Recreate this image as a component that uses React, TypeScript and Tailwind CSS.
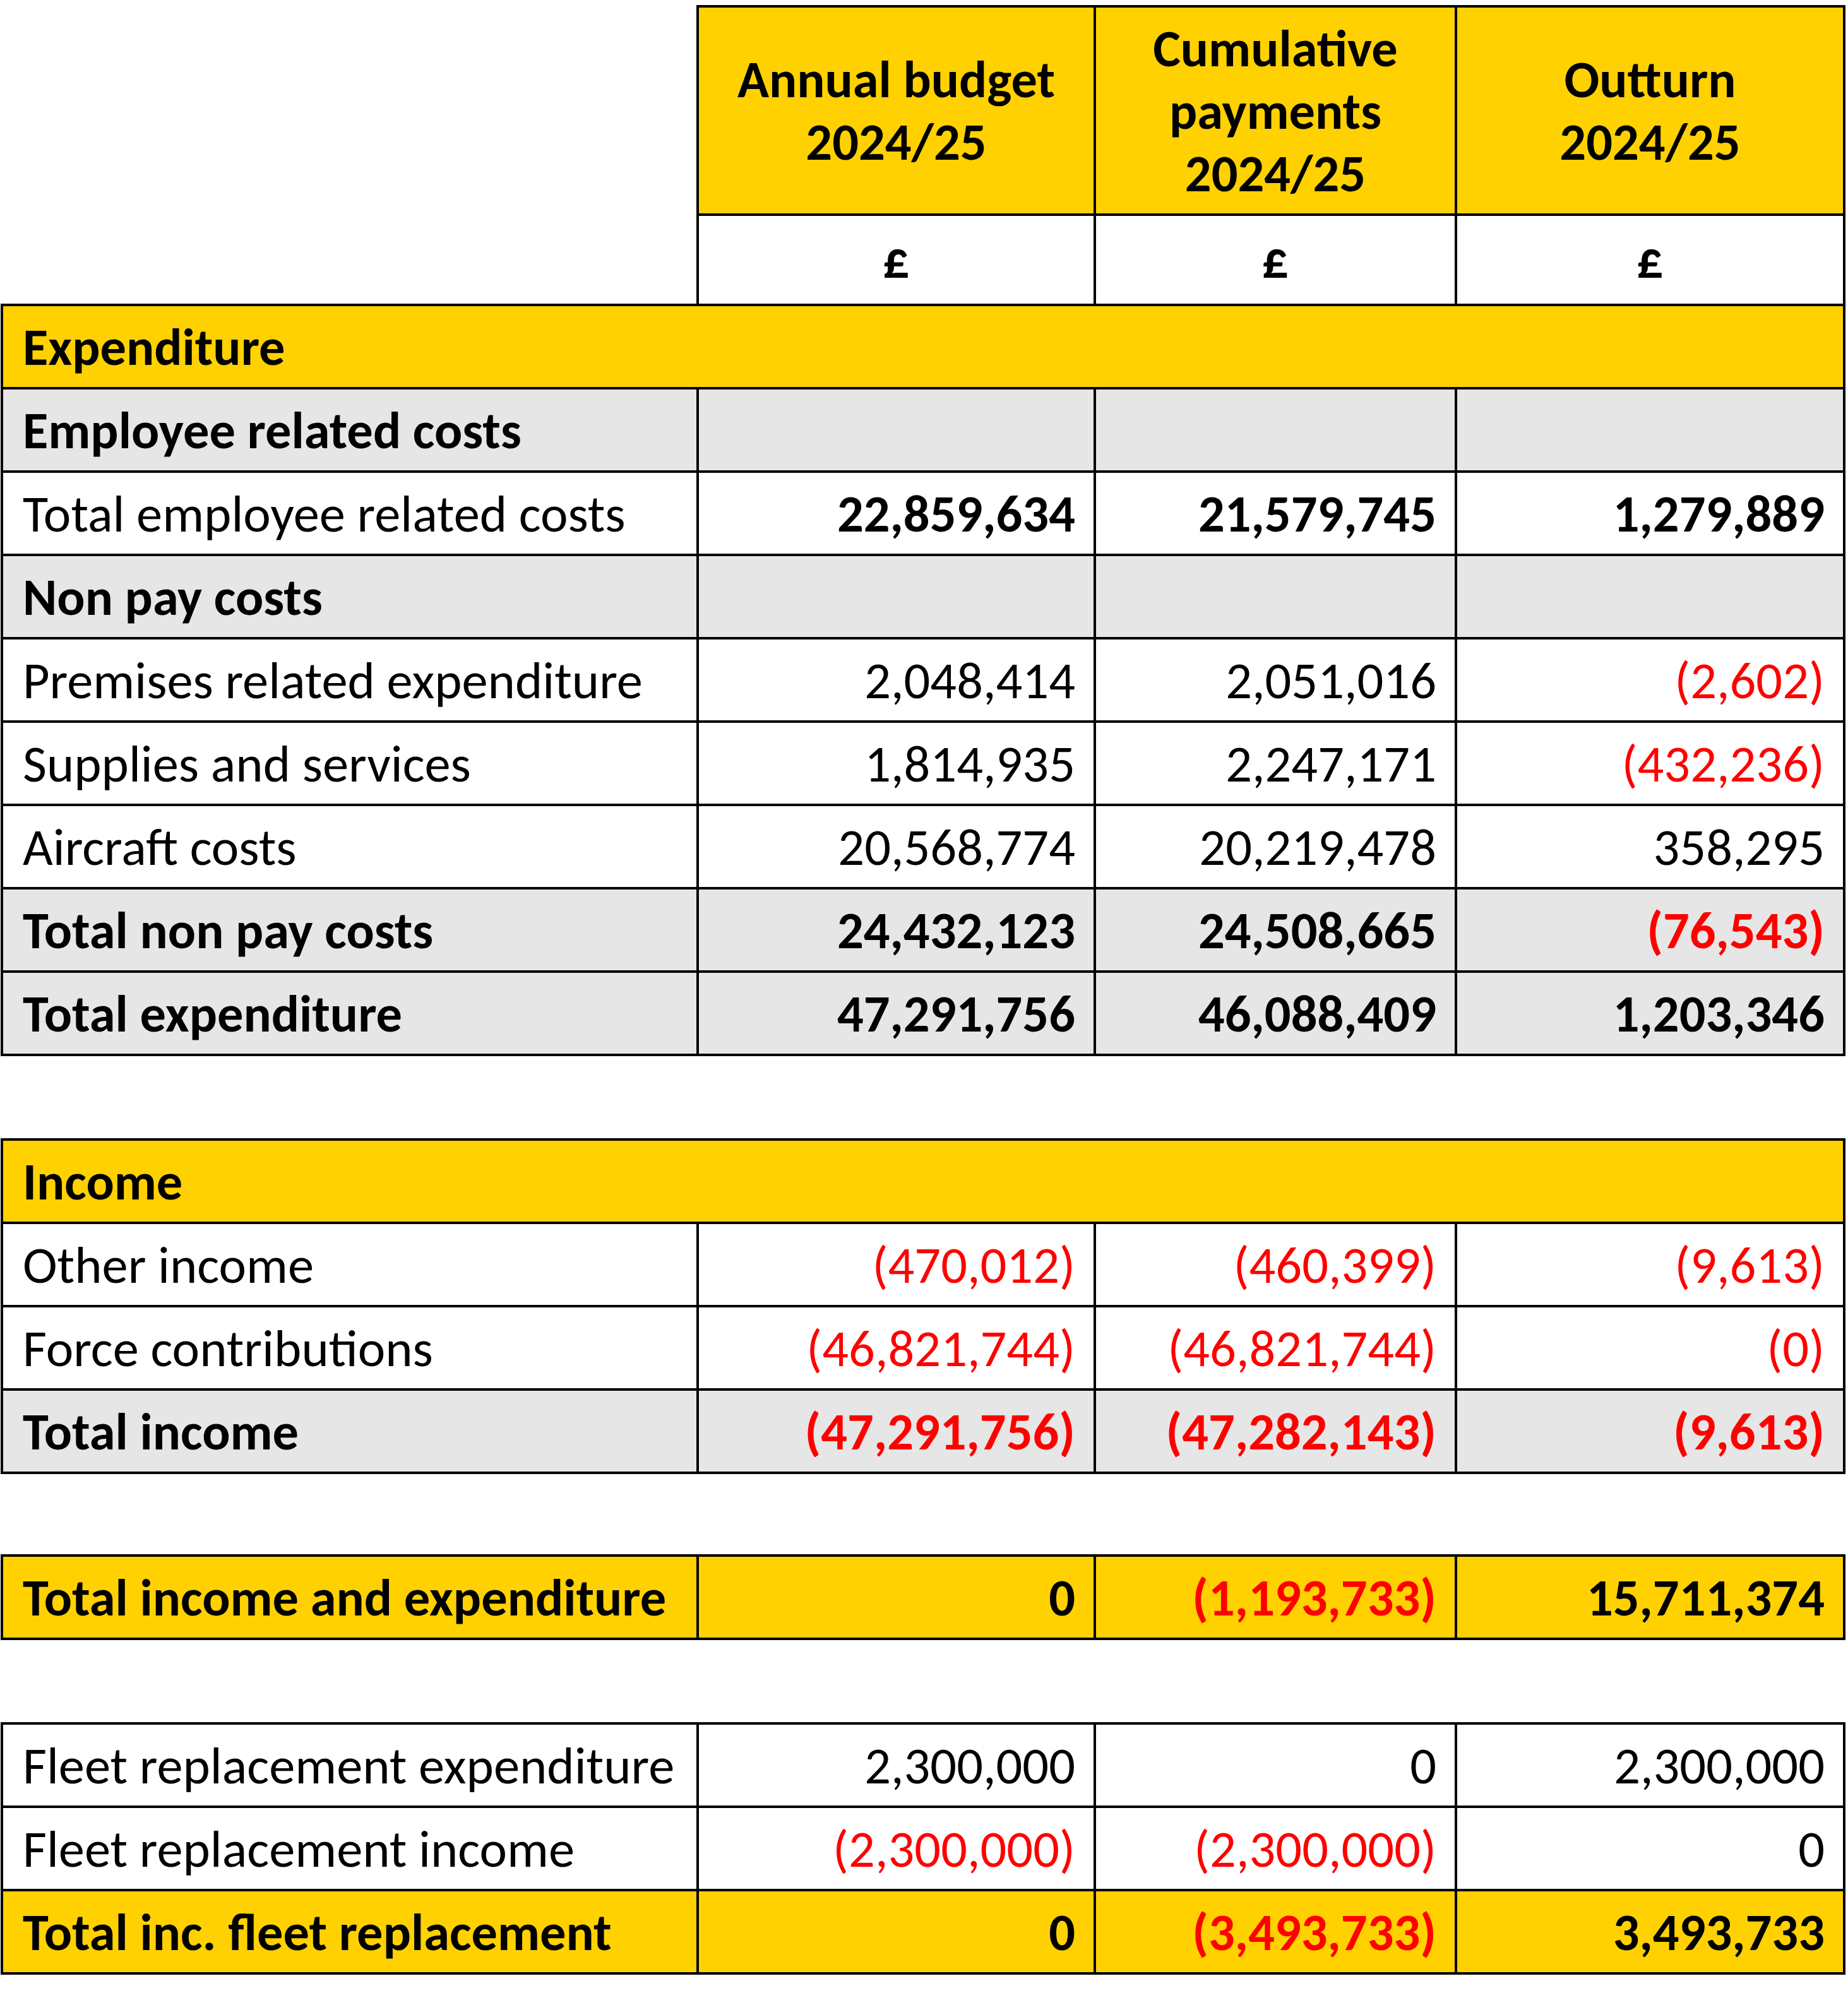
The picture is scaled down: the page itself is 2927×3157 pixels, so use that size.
type Row = {
  label: string;
  values?: string[];
  bg: "white" | "gray" | "yellow";
  labelBold?: boolean;
  valuesBold?: boolean;
};

const BG = {
  white: "bg-white",
  gray: "bg-[#e7e6e6]",
  yellow: "bg-[#ffd100]",
};

const expenditure: Row[] = [
  { label: "Expenditure", bg: "yellow", labelBold: true },
  { label: "Employee related costs", values: ["", "", ""], bg: "gray", labelBold: true },
  {
    label: "Total employee related costs",
    values: ["22,859,634", "21,579,745", "1,279,889"],
    bg: "white",
    valuesBold: true,
  },
  { label: "Non pay costs", values: ["", "", ""], bg: "gray", labelBold: true },
  { label: "Premises related expenditure", values: ["2,048,414", "2,051,016", "(2,602)"], bg: "white" },
  { label: "Supplies and services", values: ["1,814,935", "2,247,171", "(432,236)"], bg: "white" },
  { label: "Aircraft costs", values: ["20,568,774", "20,219,478", "358,295"], bg: "white" },
  {
    label: "Total non pay costs",
    values: ["24,432,123", "24,508,665", "(76,543)"],
    bg: "gray",
    labelBold: true,
    valuesBold: true,
  },
  {
    label: "Total expenditure",
    values: ["47,291,756", "46,088,409", "1,203,346"],
    bg: "gray",
    labelBold: true,
    valuesBold: true,
  },
];

const income: Row[] = [
  { label: "Income", bg: "yellow", labelBold: true },
  { label: "Other income", values: ["(470,012)", "(460,399)", "(9,613)"], bg: "white" },
  { label: "Force contributions", values: ["(46,821,744)", "(46,821,744)", "(0)"], bg: "white" },
  {
    label: "Total income",
    values: ["(47,291,756)", "(47,282,143)", "(9,613)"],
    bg: "gray",
    labelBold: true,
    valuesBold: true,
  },
];

const totals: Row[] = [
  {
    label: "Total income and expenditure",
    values: ["0", "(1,193,733)", "15,711,374"],
    bg: "yellow",
    labelBold: true,
    valuesBold: true,
  },
];

const fleet: Row[] = [
  { label: "Fleet replacement expenditure", values: ["2,300,000", "0", "2,300,000"], bg: "white" },
  { label: "Fleet replacement income", values: ["(2,300,000)", "(2,300,000)", "0"], bg: "white" },
  {
    label: "Total inc. fleet replacement",
    values: ["0", "(3,493,733)", "3,493,733"],
    bg: "yellow",
    labelBold: true,
    valuesBold: true,
  },
];

function Table({ rows, className = "" }: { rows: Row[]; className?: string }) {
  return (
    <div
      className={`grid w-[2922px] grid-cols-[1102px_629px_572px_615px] border-l-4 border-t-4 border-black ${className}`}
    >
      {rows.map((row) =>
        row.values ? (
          <div key={row.label} className="contents">
            <div
              className={`flex h-[132px] items-center border-b-4 border-r-4 border-black pl-[31px] ${BG[row.bg]} ${
                row.labelBold ? "font-bold" : ""
              }`}
            >
              {row.label}
            </div>
            {row.values.map((v, i) => (
              <div
                key={i}
                className={`flex h-[132px] items-center justify-end border-b-4 border-r-4 border-black pr-[29px] ${BG[row.bg]} ${
                  row.valuesBold ? "font-bold" : ""
                } ${v.startsWith("(") ? "text-[#ff0000]" : ""}`}
              >
                {v}
              </div>
            ))}
          </div>
        ) : (
          <div
            key={row.label}
            className={`col-span-4 flex h-[132px] items-center border-b-4 border-r-4 border-black pl-[31px] ${BG[row.bg]} ${
              row.labelBold ? "font-bold" : ""
            }`}
          >
            {row.label}
          </div>
        ),
      )}
    </div>
  );
}

const headers = [
  ["Annual budget", "2024/25"],
  ["Cumulative", "payments", "2024/25"],
  ["Outturn", "2024/25"],
];

export default function App() {
  return (
    <div className="min-h-[3157px] w-[2927px] bg-white pl-[1px] pt-[8px] text-[82.5px] leading-[1.2] text-black [font-family:Carlito,Lato,sans-serif]">
      <div className="ml-[1102px] grid w-[1820px] grid-cols-[629px_572px_615px] border-l-4 border-t-4 border-black font-bold">
        {headers.map((lines) => (
          <div
            key={lines.join(" ")}
            className="flex h-[330px] flex-col items-center justify-center border-b-4 border-r-4 border-black bg-[#ffd100] text-center"
          >
            {lines.map((l) => (
              <span key={l}>{l}</span>
            ))}
          </div>
        ))}
        {headers.map((lines) => (
          <div
            key={"p" + lines.join(" ")}
            className="flex h-[139px] items-center justify-center border-r-4 border-black bg-white"
          >
            £
          </div>
        ))}
      </div>
      <Table rows={expenditure} />
      <Table rows={income} className="mt-[130px]" />
      <Table rows={totals} className="mt-[127px]" />
      <Table rows={fleet} className="mt-[130px]" />
    </div>
  );
}
